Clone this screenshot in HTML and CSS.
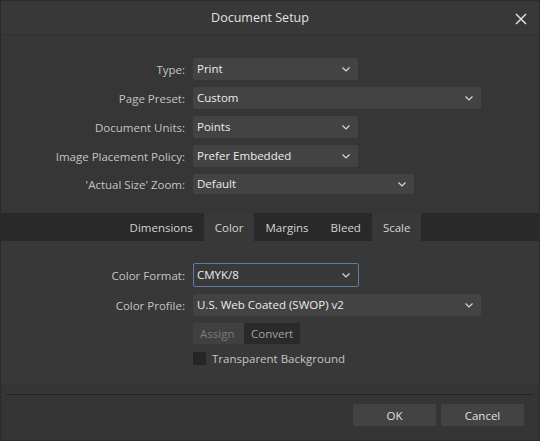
FILE: index.html
```html
<!DOCTYPE html>
<html>
<head>
<meta charset="utf-8">
<link rel="stylesheet" href="styles.css">
</head>
<body>
<div class="win">
  <div class="titlebar">
    <span class="title">Document Setup</span>
    <svg class="close" width="12" height="12" viewBox="0 0 12 12"><path d="M1 1L11 11M11 1L1 11" stroke="#e0e0e0" stroke-width="1.5" fill="none"/></svg>
  </div>
  <div class="form top">
    <label class="lbl">Type:</label>
    <div class="sel w165"><span>Print</span><svg class="chev" width="8" height="5" viewBox="0 0 8 5"><path d="M0.5 0.5L4 4L7.5 0.5" stroke="#d8d8d8" stroke-width="1.2" fill="none"/></svg></div>
    <label class="lbl">Page Preset:</label>
    <div class="sel w288"><span>Custom</span><svg class="chev" width="8" height="5" viewBox="0 0 8 5"><path d="M0.5 0.5L4 4L7.5 0.5" stroke="#d8d8d8" stroke-width="1.2" fill="none"/></svg></div>
    <label class="lbl">Document Units:</label>
    <div class="sel w165"><span>Points</span><svg class="chev" width="8" height="5" viewBox="0 0 8 5"><path d="M0.5 0.5L4 4L7.5 0.5" stroke="#d8d8d8" stroke-width="1.2" fill="none"/></svg></div>
    <label class="lbl">Image Placement Policy:</label>
    <div class="sel w165"><span>Prefer Embedded</span><svg class="chev" width="8" height="5" viewBox="0 0 8 5"><path d="M0.5 0.5L4 4L7.5 0.5" stroke="#d8d8d8" stroke-width="1.2" fill="none"/></svg></div>
    <label class="lbl">'Actual Size' Zoom:</label>
    <div class="sel w221"><span>Default</span><svg class="chev" width="8" height="5" viewBox="0 0 8 5"><path d="M0.5 0.5L4 4L7.5 0.5" stroke="#d8d8d8" stroke-width="1.2" fill="none"/></svg></div>
  </div>
  <div class="tabs">
    <div class="tab">Dimensions</div>
    <div class="tab on">Color</div>
    <div class="tab">Margins</div>
    <div class="tab">Bleed</div>
    <div class="tab on">Scale</div>
  </div>
  <div class="pane">
    <div class="form">
      <label class="lbl">Color Format:</label>
      <div class="sel w166 focus"><span>CMYK/8</span><svg class="chev" width="8" height="5" viewBox="0 0 8 5"><path d="M0.5 0.5L4 4L7.5 0.5" stroke="#d8d8d8" stroke-width="1.2" fill="none"/></svg></div>
      <label class="lbl">Color Profile:</label>
      <div class="sel w288"><span>U.S. Web Coated (SWOP) v2</span><svg class="chev" width="8" height="5" viewBox="0 0 8 5"><path d="M0.5 0.5L4 4L7.5 0.5" stroke="#d8d8d8" stroke-width="1.2" fill="none"/></svg></div>
      <span></span>
      <div class="btnrow"><div class="sbtn assign">Assign</div><div class="sbtn convert">Convert</div></div>
      <span></span>
      <div class="check"><span class="box"></span><span>Transparent Background</span></div>
    </div>
  </div>
  <div class="footer">
    <div class="sep"></div>
    <div class="actions">
      <div class="btn">OK</div>
      <div class="btn">Cancel</div>
    </div>
  </div>
</div>
</body>
</html>
```
FILE: styles.css
```css
* { box-sizing: border-box; }
html, body { margin: 0; padding: 0; background: #2a2a2a; }
body { font-family: "Open Sans", "Noto Sans", sans-serif; font-size: 11.5px; color: #c9c9c9; }
.win {
  width: 540px; height: 441px;
  background: #363636;
  border: 1px solid #2b2b2b;
  display: flex; flex-direction: column;
  position: relative;
}
.titlebar {
  height: 34px;
  flex: none;
  background: #383838;
  border-bottom: 1px solid #313131;
  display: flex; align-items: center; justify-content: center;
  padding-right: 20px;
  position: relative;
}
.title { font-size: 12.5px; color: #e2e2e2; }
.close { position: absolute; right: 12px; top: 12px; }
.form {
  display: grid;
  grid-template-columns: 184px auto;
  column-gap: 8px;
  row-gap: 7px;
  align-items: center;
}
.top { padding-top: 23px; }
.lbl { text-align: right; color: #c4c4c4; white-space: nowrap; }
.sel {
  height: 22px;
  background: #434343;
  border-radius: 2px;
  display: flex; align-items: center; justify-content: space-between;
  padding: 0 8px 0 4px;
  color: #ececec;
}
.sel span { line-height: 1; }
.w165 { width: 165px; }
.w166 { width: 166px; }
.w221 { width: 221px; height: 20px; }
.w288 { width: 288px; }
.focus { height: 24px; border: 1px solid #5d7d9f; background: #393939; padding-left: 3px; }
.tabs {
  margin-top: 19px;
  height: 28px;
  flex: none;
  background: #292929;
  display: flex; justify-content: center;
}
.tab { padding: 0 11px; display: flex; align-items: center; color: #d4d4d4; }
.tab.on { background: #383838; }
.pane {
  height: 143px;
  flex: none;
  background: #383838;
  padding-top: 22px;
}
.btnrow { display: flex; height: 21px; }
.sbtn { display: flex; align-items: center; padding: 0 7px; }
.assign { background: #404040; color: #7b7b7b; width: 51px; }
.convert { background: #2a2a2a; color: #a2a2a2; width: 56px; }
.check { display: flex; align-items: center; gap: 6px; color: #c4c4c4; height: 14px; }
.box { width: 13px; height: 13px; background: #262626; border: 1px solid #222; border-radius: 1px; }
.footer { flex: 1; background: #353535; padding: 10px 5px 0 5px; }
.sep { height: 1px; background: #242424; }
.actions { display: flex; justify-content: flex-end; gap: 5px; padding: 9px 10px 0 0; }
.btn {
  width: 83px; height: 22px;
  background: #434343; border-radius: 2px;
  display: flex; align-items: center; justify-content: center;
  color: #e0e0e0;
}
```
